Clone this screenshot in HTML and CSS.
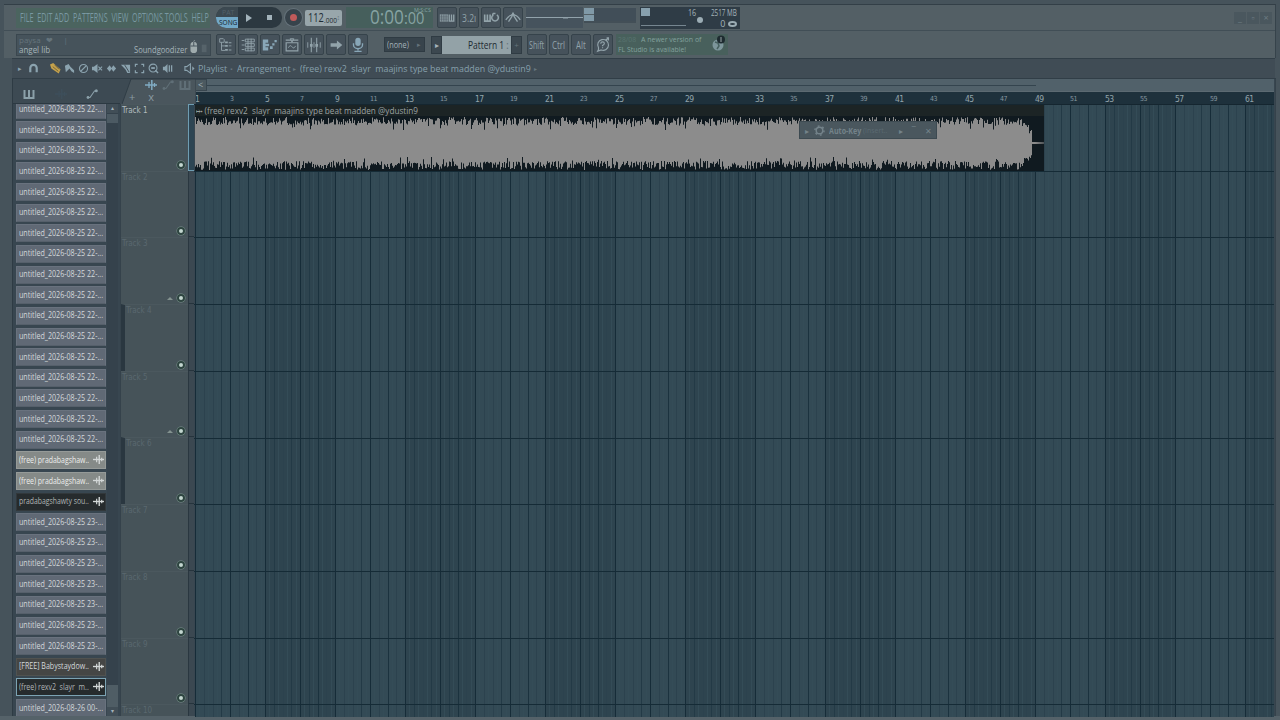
FILE: index.html
```
<!DOCTYPE html>
<html lang="en">
<head>
  <meta charset="UTF-8">
  <title>Playlist - Arrangement</title>
  <link rel="stylesheet" href="styles.css">
</head>
<body>

  <!-- Icons -->
  <svg class="defs">
    <symbol id="i-magnet" viewBox="0 0 12 12"><path d="M2.5 10V5.500a3.500 3.500 0 0 1 7 0V10" fill="none" stroke="currentColor" stroke-width="2.400"/></symbol>
    <symbol id="i-pencil" viewBox="0 0 12 12"><path d="M0 1.500l3.500-1.500 8 7-2 4.500-8-5.500z" fill="#c5a24c"/><path d="M3 4l6 5M5 2l5 5" stroke="#5c5136" stroke-width=".8"/></symbol>
    <symbol id="i-brush" viewBox="0 0 12 12"><path d="M1 3l4-2 2 3 4 4v3L8 9 6 6 2 10z" fill="currentColor"/></symbol>
    <symbol id="i-ban" viewBox="0 0 12 12"><circle cx="6" cy="6" r="4.400" fill="none" stroke="currentColor" stroke-width="1.200"/><path d="M3 9l6-6" stroke="currentColor" stroke-width="1.200"/></symbol>
    <symbol id="i-mute" viewBox="0 0 12 12"><path d="M0 4h2l4-3v10L2 8H0z" fill="currentColor"/><path d="M7 4l4 4M11 4L7 8" stroke="currentColor" stroke-width="1.200"/></symbol>
    <symbol id="i-slip" viewBox="0 0 12 12"><path d="M1 6l3-3.500L6 5.500 8 2.500 11 6 8 9.500 6 6.500 4 9.500z" fill="currentColor"/></symbol>
    <symbol id="i-slice" viewBox="0 0 12 12"><path d="M1 2h6l4 0v9H8L6 7z" fill="currentColor"/><path d="M5 2l5 8" stroke="#404c55"/></symbol>
    <symbol id="i-select" viewBox="0 0 12 12"><path d="M1.500 4V1.500h2.500M8 1.500h2.500V4M10.500 8v2.500H8M4 10.500H1.500V8" fill="none" stroke="currentColor" stroke-width="1.300"/></symbol>
    <symbol id="i-zoom" viewBox="0 0 12 12"><circle cx="5.500" cy="5.500" r="4.300" fill="none" stroke="currentColor" stroke-width="1.200"/><path d="M8 8l3 3" stroke="currentColor" stroke-width="1.500"/><path d="M3.500 5.500h4" stroke="currentColor" stroke-width="2"/></symbol>
    <symbol id="i-play" viewBox="0 0 12 12"><path d="M1 4h2l3-3v10L3 8H1z" fill="currentColor"/><path d="M8 2.500v7M10.500 2.500v7" stroke="currentColor" stroke-width="1.400"/></symbol>
    <symbol id="i-speaker" viewBox="0 0 12 12"><path d="M1 4h2l4-3v10L3 8H1z" fill="none" stroke="currentColor" stroke-width="1.200"/><path d="M9 3.500L11.500 6 9 8.500z" fill="currentColor"/></symbol>
    <symbol id="i-piano" viewBox="0 0 12 12"><path d="M1.500 2v8h9V2M6 2v7" fill="none" stroke="currentColor" stroke-width="2"/></symbol>
    <symbol id="i-line" viewBox="0 0 12 12"><path d="M2 9.500h2L8.500 3H10" fill="none" stroke="currentColor" stroke-width="1.100"/><circle cx="2" cy="9.500" r="1.400" fill="currentColor"/><circle cx="10.300" cy="2.800" r="1.500" fill="currentColor"/></symbol>
    <symbol id="i-wave" viewBox="0 0 12 12"><path d="M0 6h12" stroke="currentColor" stroke-width="1.500"/><path d="M4 3v6M9.500 4v4" stroke="currentColor" stroke-width="1.300"/><path d="M6.800 1v10" stroke="currentColor" stroke-width="1.500"/></symbol>

    <symbol id="b-typing" viewBox="0 0 20 20"><path d="M2 6h9v8H2z" fill="currentColor"/><path d="M2 8h9M2 10h9M2 12h9M4 6v8M6.500 6v8M9 6v8" stroke="#46525b" stroke-width=".6"/><path d="M12.500 6v7.500h5V6M15 6v7" fill="none" stroke="currentColor" stroke-width="1.500"/></symbol>
    <symbol id="b-loop" viewBox="0 0 20 20"><path d="M3 6v7.500h6V6M6 6v7" fill="none" stroke="currentColor" stroke-width="1.800"/><path d="M12.500 6.500a3.700 3.700 0 1 0 4 0M12 5v3M12 5h3" fill="none" stroke="currentColor" stroke-width="1.700"/></symbol>
    <symbol id="b-metro" viewBox="0 0 20 20"><path d="M2 12q4-6 8-5 4-1 8 5M10 4v4M9 8l-4 6M11 8l4 6" fill="none" stroke="currentColor" stroke-width="1.500"/><path d="M7.500 7L10 4l2.500 3z" fill="currentColor"/></symbol>
    <symbol id="b-browser" viewBox="0 0 20 20"><path d="M3 3h4l1 1v3H3zM5 7v9h4M5 11h4" fill="none" stroke="currentColor" stroke-width="1"/><path d="M9 6h3v2H9zM9 10h3v2H9zM9 14.500h3v2H9zM13 7h3v1h-3zM13 10.500h3v1h-3zM13 15h3v1h-3z" fill="currentColor"/></symbol>
    <symbol id="b-rack" viewBox="0 0 20 20"><path d="M3 5h3M3 10h3M3 15h3M7 3.500h10v3H7zM7 8.500h10v3H7zM7 13.500h10v3H7zM10 3v14M13.500 3v14" fill="none" stroke="currentColor" stroke-width="1"/></symbol>
    <symbol id="b-steps" viewBox="0 0 20 20"><path d="M2 4h6v3.500H5v1h4v3H5v1h3V16H2z" fill="currentColor"/><path d="M10 11.500h3v3h-3zM12.500 8h2.500v2.500h-2.500zM15 4.500h2.500V7H15z" fill="currentColor"/></symbol>
    <symbol id="b-playlist" viewBox="0 0 20 20"><path d="M3.500 7.500h13v9h-13zM3 4.500h14" fill="none" stroke="currentColor" stroke-width="1.300"/><path d="M8 3h4l-2 4zM6 13q2-4 4-1t4-1" fill="none" stroke="currentColor"/></symbol>
    <symbol id="b-mixer" viewBox="0 0 20 20"><path d="M7 2v16M13 2v16" stroke="currentColor" stroke-width="1.200"/><path d="M3 7v6M17 7v6M10 7v6" stroke="currentColor" stroke-width="1.400" opacity=".7"/><path d="M5.500 9h3v3h-3zM11.500 9h3v3h-3z" fill="currentColor"/></symbol>
    <symbol id="b-arrow" viewBox="0 0 20 20"><path d="M4 8h7V5l6 5-6 5v-3H4z" fill="currentColor"/></symbol>
    <symbol id="b-mic" viewBox="0 0 20 20"><rect x="7" y="2" width="6" height="9" rx="3" fill="currentColor"/><path d="M5 8v2a5 4 0 0 0 10 0V8M10 14v2M6 17h8" fill="none" stroke="currentColor" stroke-width="1.500"/></symbol>
    <symbol id="b-help" viewBox="0 0 20 20"><path d="M5 15l-1 2 4-1.500a6 6 0 1 0-3-2.500zM13 5l3-3M14 2h2v3" fill="none" stroke="currentColor" stroke-width="1.300"/><path d="M7.500 8.500q0-2 2-2t2 1.800q0 1-2 2.200v1M9.500 12.500v1" fill="none" stroke="currentColor" stroke-width="1.300"/></symbol>
  </svg>

  <div class="window">

    <div class="toolbar">
      <div class="row">
        <div class="menu"><span data-w="189">FILE&nbsp; EDIT ADD&nbsp; PATTERNS&nbsp; VIEW&nbsp; OPTIONS TOOLS&nbsp; HELP</span></div>
        <div class="transport">
          <div class="mode"><span class="pat" data-w="12">PAT</span><span class="song" data-w="18">SONG</span></div>
          <div class="play"></div>
          <div class="stop"></div>
        </div>
        <div class="record"></div>
        <div class="tempo"><span data-w="16">112</span><small data-w="13">.000</small><i>↕</i></div>
        <div class="clock">
          <span data-w="54">0:00<small>:00</small></span>
          <sup data-w="17">M:S:CS</sup>
        </div>
        <div class="buttons">
          <div class="btn"><svg><use href="#b-typing"/></svg></div>
          <div class="btn"><b data-w="14">3.2ı</b></div>
          <div class="btn"><svg><use href="#b-loop"/></svg></div>
          <div class="btn"><svg><use href="#b-metro"/></svg></div>
        </div>
        <div class="scope">
          <svg viewBox="0 0 110 21"><path d="M0 0h57v21H0z" fill="#46535d"/><path d="M0 10.500h57M37 11h5" stroke="#92a2ab"/><path d="M58 1h10v6H58zM58 8h10v6H58z" fill="#8099a7"/><path d="M68 1h42v13H68z" fill="#414e58"/><path d="M58 15h52" stroke="#34414b"/></svg>
        </div>
        <div class="cpu">
          <svg viewBox="0 0 46 21"><path d="M1 1h9v8H1z" fill="#87a0ae"/><path d="M1 18.500h45" stroke="#768690"/></svg>
          <div class="poly"><span data-w="8">16</span><i></i></div>
          <div class="mem"><span data-w="26">2517 MB</span><span>0 <u></u></span></div>
        </div>
        <div class="winbtns"><i>_</i><i>▫</i><i>×</i></div>
      </div>

      <div class="row second">
        <div class="hint">
          <div class="hint-top"><span data-w="22">paysa</span><em>❤</em><em>|</em></div>
          <div class="hint-main"><span data-w="31">angel lib</span><span class="right" data-w="53">Soundgoodizer</span></div>
          <svg class="mouse" viewBox="0 0 20 18"><path d="M5 5q0-3 2-3M2 8q0-4 3.500-4T9 8v5q0 3-3.500 3T2 13z" fill="#9fabad"/><path d="M2 8.500h7M5.500 4v4.500" stroke="#46535b"/><path d="M14 7h5v8h-5z" fill="#56636a"/></svg>
        </div>
        <div class="buttons">
          <div class="btn"><svg><use href="#b-browser"/></svg></div>
          <div class="btn"><svg><use href="#b-rack"/></svg></div>
          <div class="btn blue"><svg><use href="#b-steps"/></svg></div>
          <div class="btn"><svg><use href="#b-playlist"/></svg></div>
          <div class="btn"><svg><use href="#b-mixer"/></svg></div>
          <div class="btn"><svg><use href="#b-arrow"/></svg></div>
          <div class="btn blue"><svg><use href="#b-mic"/></svg></div>
        </div>
        <div class="snap"><span data-w="22">(none)</span><i>▸</i></div>
        <div class="pattern">
          <div class="side">▸</div>
          <div class="name"><span data-w="36">Pattern 1</span><i>:</i></div>
          <div class="side plus">+</div>
        </div>
        <div class="buttons keys">
          <div class="btn"><span data-w="15">Shift</span></div>
          <div class="btn"><span data-w="13">Ctrl</span></div>
          <div class="btn"><span data-w="10">Alt</span></div>
          <div class="btn"><svg><use href="#b-help"/></svg></div>
        </div>
        <div class="news">
          <div><span class="date" data-w="18">28/08</span><span data-w="60">A newer version of</span></div>
          <div><span data-w="68">FL Studio is available!</span></div>
          <svg viewBox="0 0 14 18"><circle cx="6" cy="10" r="5.500" fill="#7d969b"/><path d="M3 7l3 1 1 3-2 3" stroke="#47605f" stroke-width="1.500" fill="none"/><circle cx="9" cy="4.500" r="4" fill="#1e2b30"/><path d="M9 2v5" stroke="#96a4a6"/></svg>
        </div>
      </div>
    </div>

    <div class="titlebar">
      <span class="tri">▸</span>
      <svg class="magnet"><use href="#i-magnet"/></svg>
      <div class="tools">
        <svg><use href="#i-pencil"/></svg>
        <svg><use href="#i-brush"/></svg>
        <svg><use href="#i-ban"/></svg>
        <svg><use href="#i-mute"/></svg>
        <svg><use href="#i-slip"/></svg>
        <svg><use href="#i-slice"/></svg>
        <svg><use href="#i-select"/></svg>
        <svg><use href="#i-zoom"/></svg>
        <svg><use href="#i-play"/></svg>
      </div>
      <svg class="speaker"><use href="#i-speaker"/></svg>
      <span class="crumb" data-w="29">Playlist</span><em>▪</em>
      <span class="crumb" data-w="54">Arrangement</span><em>▸</em>
      <span class="crumb" data-w="231">(free) rexv2&nbsp; slayr&nbsp; maajins type beat madden @ydustin9</span><em>▸</em>
    </div>

    <div class="main">
      <div class="picker">
        <div class="picker-head">
          <svg><use href="#i-piano"/></svg>
          <svg class="dim"><use href="#i-wave"/></svg>
          <svg><use href="#i-line"/></svg>
        </div>
        <div class="picker-body">
          <div class="clips" id="clips"></div>
          <div class="scroll"><i>▴</i><i class="cap"></i><b></b><i>▾</i></div>
        </div>
      </div>

      <div class="tracks">
        <div class="tracks-head">
          <svg viewBox="0 0 74 26">
            <path d="M0 26L9 1h65v25" fill="#4a565d" stroke="#303d46"/>
          </svg>
          <div class="types">
            <svg class="on"><use href="#i-wave"/></svg>
            <svg><use href="#i-line"/></svg>
            <svg><use href="#i-piano"/></svg>
          </div>
          <div class="ops"><span>+</span><span>x</span></div>
        </div>
        <div id="tracks"></div>
      </div>

      <div class="arrange">
        <div class="hscroll"><span>&lt;</span><i></i></div>
        <div class="ruler" id="ruler"></div>
        <div class="canvas">
          <svg id="grid" width="1082" height="612"></svg>
          <div class="clip">
            <div class="clip-name"><span data-w="222">⤠ (free) rexv2&nbsp; slayr&nbsp; maajins type beat madden @ydustin9</span></div>
            <svg id="wave" width="849" height="55"></svg>
          </div>
          <div class="plugin">
            <span>▸</span>
            <svg viewBox="0 0 12 12"><circle cx="6" cy="6" r="3.600" fill="none" stroke="currentColor" stroke-width="1.600"/><circle cx="6" cy="6" r="5" fill="none" stroke="currentColor" stroke-width="1.500" stroke-dasharray="2 3.240"/></svg>
            <strong data-w="32">Auto-Key</strong><small data-w="24">(Insert..</small>
            <span class="gap">▸</span><span>‾</span><span>✕</span>
          </div>
        </div>
      </div>
    </div>
  </div>

  <script>
    const BAR = 17.5;
    const TRACK = 66.7;
    const clips = document.getElementById('clips');
    const tracks = document.getElementById('tracks');
    const ruler = document.getElementById('ruler');

    // Picker list
    const list = [];
    for (let i = 0; i < 17; i++) list.push(['untitled_2026-08-25 22-...', '']);
    list.push(['(free) pradabagshaw..', 'light']);
    list.push(['(free) pradabagshaw..', 'light']);
    list.push(['pradabagshawty sou..', 'dark']);
    for (let i = 0; i < 7; i++) list.push(['untitled_2026-08-25 23-...', '']);
    list.push(['[FREE] Babystaydow..', 'brown']);
    list.push(['(free) rexv2  slayr  m..', 'dark selected']);
    list.push(['untitled_2026-08-26 00-...', '']);

    list.forEach(([name, type]) => {
      const item = document.createElement('div');
      item.className = 'item ' + type;
      const label = document.createElement('span');
      label.textContent = name;
      label.dataset.w = type ? 70 : 84;
      item.appendChild(label);
      if (type) item.innerHTML += '<svg><use href="#i-wave"/></svg>';
      clips.appendChild(item);
    });

    // Track headers
    for (let i = 1; i <= 10; i++) {
      const t = document.createElement('div');
      t.className = 'track';
      if (i === 1) t.classList.add('active');
      if (i === 4 || i === 6) t.classList.add('grouped');
      t.innerHTML = `<div class="panel"><span>Track ${i}</span><div class="led">${i === 3 || i === 5 ? '<em></em>' : ''}<i></i></div></div><div class="edge"></div>`;
      tracks.appendChild(t);
    }

    // Ruler
    for (let n = 1; n <= 61; n += 2) {
      const s = document.createElement('span');
      s.textContent = n;
      if (n % 4 === 3) s.className = 'minor';
      ruler.appendChild(s);
    }

    // Grid
    let g = '';
    for (let n = 0; n < 62; n += 4) {
      const fill = n % 8 ? '#2e444f' : '#334a55';
      g += `<rect x="${1 + n * BAR}" y="0" width="${BAR * 4}" height="612" fill="${fill}"/>`;
    }
    for (let b = 0; b < 62 * 4; b++) {
      const x = Math.round(1 + b * BAR / 4);
      const n = b / 4;
      let color = '#2c424e';
      if (b % 2 === 1) color = '#344c57';
      if (b % 16 === 6 || b % 32 === 18 || b % 32 === 26) color = '#233a46';
      if (b % 4 === 0 && n % 4 !== 1) color = n % 2 ? '#1b323e' : '#162c38';
      g += `<rect x="${x}" y="0" width="1" height="612" fill="${color}"/>`;
    }
    for (let i = 1; i < 10; i++) {
      g += `<rect x="0" y="${Math.round(i * TRACK) - 1}" width="1082" height="1" fill="#152b36"/>`;
    }
    document.getElementById('grid').innerHTML = g;

    // Waveform
    let seed = 11;
    function rnd() {
      seed = (seed * 16807) % 2147483647;
      return seed / 2147483647;
    }
    let upper = '', lower = '';
    for (let x = 0; x <= 836; x++) {
      const edge = x > 828 ? (x - 828) * 1.4 : 0;
      const up = 1 + Math.pow(rnd(), .9) * (rnd() > .85 ? 13 : 8) + edge;
      const low = 54 - Math.pow(rnd(), .8) * (rnd() > .85 ? 13 : 9) - edge;
      upper += `L${x} ${up.toFixed(1)}h1`;
      lower = `L${x + 1} ${low.toFixed(1)}h-1` + lower;
    }
    document.getElementById('wave').innerHTML =
      `<path d="M0 27${upper}L837 27${lower}Z" fill="#8c8c8c"/><path d="M836 26h4l9 .6v.8l-9 .6h-4z" fill="#8c8c8c"/>`;

    // Squeeze labels to the width of the narrow UI face
    document.querySelectorAll('[data-w]').forEach(el => {
      const natural = el.offsetWidth;
      const w = Number(el.dataset.w);
      el.style.transform = `scaleX(${w / natural})`;
      el.style.marginRight = (w - natural) + 'px';
    });
  </script>

</body>
</html>
```
FILE: styles.css
```
:root {
  --bar: #535f65;
  --bar-dark: #404c55;
  --inset: #46525b;
  --line: #35424b;
  --icon: #8ba3af;
  --text: #a5b3ba;
}

* {
  box-sizing: border-box;
}

body {
  margin: 0;
  width: 1280px;
  height: 720px;
  overflow: hidden;
  background: #4c5a62;
  font-family: 'Open Sans', 'Noto Sans', sans-serif;
  font-size: 9px;
  color: var(--text);
}

i, em, u {
  font-style: normal;
  text-decoration: none;
}

svg {
  display: block;
  flex: none;
}

.defs {
  display: none;
}

[data-w] {
  display: inline-block;
  flex: none;
  white-space: pre;
  transform-origin: 0 50%;
}

.window {
  height: 720px;
  padding: 4px 4px 0;
  border-bottom: 4px solid #556269;
  background: #46535b;
}

/* Toolbar */
.toolbar {
  height: 54px;
  background: var(--bar);
  border-top: 1px solid #333f47;
  border-right: 1px solid #36434b;
}

.row {
  display: flex;
  align-items: center;
  height: 26px;
  padding-left: 12px;
  border-bottom: 1px solid #414e56;
}

.row.second {
  height: 27px;
  border-bottom: 0;
}

.menu {
  flex: none;
  width: 194px;
  height: 20px;
  padding-left: 4px;
  background: #4b645f;
  font-size: 12px;
  line-height: 19px;
  color: #7998a2;
}

.transport {
  display: flex;
  align-items: center;
  width: 66px;
  height: 21px;
  margin-left: 6px;
  border-radius: 10px;
  background: #2c3840;
  overflow: hidden;
}

.mode {
  display: flex;
  flex-direction: column;
  align-items: flex-start;
  width: 22px;
  height: 21px;
  padding-left: 3px;
  font-size: 8px;
  line-height: 10px;
  background: linear-gradient(#3c4951 10px, #72a9c8 10px);
}

.mode .pat {
  margin-left: 3px;
  color: #53616a;
}

.mode .song {
  color: #14212b;
}

.play {
  margin-left: 8px;
  border: 4px solid transparent;
  border-left: 6px solid #a3b3bb;
  border-right: 0;
}

.stop {
  width: 5px;
  height: 5px;
  margin-left: 15px;
  background: #a3b3bb;
}

.record {
  width: 17px;
  height: 17px;
  margin-left: 3px;
  border: 5px solid #37434b;
  border-radius: 50%;
  background: #c05a5a;
  box-shadow: 0 0 0 1px #65727a;
}

.tempo {
  display: flex;
  align-items: center;
  width: 37px;
  height: 16px;
  margin-left: 3px;
  padding-left: 3px;
  border-radius: 2px;
  background: #98a6ab;
  color: #1e2b33;
  font-size: 12px;
}

.tempo small {
  font-size: 8px;
  margin-top: 3px;
}

.tempo i {
  font-size: 7px;
  color: #65747c;
}

.clock {
  display: flex;
  align-items: center;
  position: relative;
  width: 87px;
  height: 21px;
  margin-left: 4px;
  padding-left: 24px;
  background: #465f5c;
  color: #86a3a3;
  font-size: 20px;
  line-height: 20px;
}

.clock small {
  font-size: 17px;
}

.clock sup {
  position: absolute;
  top: 0;
  left: 68px;
  font-size: 6px;
  line-height: 6px;
}

.buttons {
  display: flex;
  gap: 2px;
  margin-left: 4px;
}

.btn {
  display: flex;
  align-items: center;
  justify-content: center;
  width: 20px;
  height: 21px;
  background: var(--inset);
  border: 1px solid #36434b;
  border-radius: 2px;
  color: #92a3aa;
}

.btn svg {
  width: 18px;
  height: 18px;
}

.btn.blue {
  color: #88a6b7;
}

.btn b {
  font-size: 11px;
  font-weight: 400;
}

.scope {
  width: 110px;
  margin-left: 3px;
}

.cpu {
  display: flex;
  width: 100px;
  height: 22px;
  margin-left: 4px;
  background: #2f3c46;
  font-size: 9px;
  line-height: 11px;
}

.cpu svg {
  width: 46px;
  height: 21px;
}

.poly {
  display: flex;
  flex-direction: column;
  align-items: flex-end;
  width: 10px;
}

.poly i {
  width: 6px;
  height: 6px;
  margin-top: -1px;
  margin-right: -7px;
  border-radius: 50%;
  background: #9cadb5;
}

.poly + .mem {
  margin-left: 15px;
}

.mem {
  display: flex;
  flex-direction: column;
  align-items: flex-end;
}

.mem u {
  display: inline-block;
  width: 9px;
  height: 6px;
  border: 2px solid #9cadb5;
  border-radius: 50%;
}

.winbtns {
  display: flex;
  gap: 1px;
  margin-left: auto;
  margin-right: 3px;
}

.winbtns i {
  width: 12px;
  height: 12px;
  background: #4a575e;
  color: #6d7b82;
  text-align: center;
  line-height: 11px;
}

.hint {
  position: relative;
  width: 195px;
  height: 22px;
  padding-left: 2px;
  background: #46535b;
  border: 1px solid #3a474f;
  font-size: 9px;
  line-height: 11px;
}

.hint-top {
  display: flex;
  gap: 5px;
  color: #65747c;
  font-size: 8px;
  line-height: 9px;
}

.hint-top em:last-child {
  margin-left: 6px;
}

.hint-main {
  display: flex;
}

.hint-main .right {
  margin-left: 84px;
}

.mouse {
  position: absolute;
  top: 3px;
  right: 2px;
  width: 20px;
  height: 17px;
}

.second .buttons {
  margin-left: 5px;
}

.snap {
  display: flex;
  justify-content: space-between;
  width: 41px;
  height: 15px;
  margin-left: 16px;
  padding: 0 3px 0 2px;
  background: #38444c;
  border: 1px solid #2f3b43;
  line-height: 13px;
}

.snap i {
  font-size: 7px;
  color: #64727a;
}

.pattern {
  display: flex;
  align-items: center;
  margin-left: 6px;
}

.side {
  width: 11px;
  height: 18px;
  background: #3c4850;
  border: 1px solid #303c44;
  font-size: 8px;
  line-height: 15px;
  text-align: center;
}

.side.plus {
  color: #65737b;
}

.name {
  display: flex;
  justify-content: flex-end;
  width: 69px;
  height: 18px;
  padding-right: 2px;
  background: #93a2a7;
  color: #1c2931;
  font-size: 11px;
  line-height: 17px;
}

.name i {
  margin-left: 2px;
  color: #64727a;
}

.keys {
  font-size: 11px;
}

.news {
  position: relative;
  width: 112px;
  height: 21px;
  margin-left: 3px;
  padding-left: 2px;
  background: #48605c;
  font-size: 8px;
  line-height: 10px;
  color: #83a09d;
}

.news .date {
  color: #587470;
}

.news > div {
  display: flex;
  gap: 5px;
}

.news svg {
  position: absolute;
  top: 1px;
  right: 2px;
  width: 14px;
  height: 18px;
}

/* Playlist window title */
.titlebar {
  display: flex;
  align-items: center;
  height: 20px;
  padding-left: 6px;
  margin-left: 8px;
  margin-right: 1px;
  background: var(--bar-dark);
  border-top: 1px solid #313e47;
  color: var(--icon);
}

.titlebar svg {
  width: 11px;
  height: 11px;
}

.tri {
  width: 10px;
  font-size: 7px;
}

.titlebar .magnet {
  margin-right: 11px;
}

.tools {
  display: flex;
  gap: 3px;
}

.titlebar .speaker {
  margin-left: 11px;
}

.crumb {
  margin-left: 3px;
  color: #87a0ac;
}

.titlebar em {
  width: 3.5px;
  margin-left: 3px;
  font-size: 6px;
  color: #687780;
}

/* Playlist */
.main {
  display: flex;
  height: 638px;
  margin-left: 8px;
  border-top: 1px solid #313e47;
  border-left: 1px solid #2e3b44;
  border-right: 1px solid #35424b;
  background: #384650;
}

.picker {
  flex: none;
  width: 107px;
}

.picker-head {
  display: flex;
  align-items: flex-end;
  justify-content: space-between;
  height: 25px;
  padding: 0 22px 3px 10px;
  background: #3d4a53;
  border-bottom: 1px solid #2c3942;
  color: #8ba0a9;
}

.picker-head svg {
  width: 12px;
  height: 12px;
}

.picker-head .dim {
  color: #3e4f5b;
}

.picker-body {
  display: flex;
  height: 612px;
  overflow: hidden;
}

.clips {
  width: 90px;
  margin: -3.500px 1px 0 3px;
}

.item {
  display: flex;
  align-items: center;
  justify-content: space-between;
  height: 18px;
  margin-bottom: 2.65px;
  padding: 0 1px 1px 2px;
  background: #606975;
  border: 1px solid #69727e;
  border-bottom-color: #56606b;
  color: #d3d8db;
  font-size: 9px;
  line-height: 16px;
}

.item svg {
  width: 11px;
  height: 11px;
  color: #d3d7d7;
}

.item.light {
  background: #858a88;
  border-color: #959a98;
  color: #eceeec;
}

.item.dark {
  background: #262b2d;
  border-color: #32383b;
  color: #b0b5b5;
}

.item.brown {
  background: #454645;
  border-color: #505250;
}

.item.selected {
  border-color: #7ca3b3;
}

.scroll {
  display: flex;
  flex-direction: column;
  width: 11px;
  background: #35424c;
}

.scroll i {
  height: 9px;
  background: #414e57;
  font-size: 6px;
  line-height: 9px;
  text-align: center;
}

.scroll .cap {
  margin-top: 1px;
  background: #4c5a63;
}

.scroll b {
  height: 22px;
  margin-top: auto;
  background: #4f5d65;
}

.tracks {
  flex: none;
  width: 74px;
  background: #35424b;
}

.tracks-head {
  position: relative;
  height: 25px;
  background: #3d4a53;
}

.tracks-head > svg {
  position: absolute;
  left: 2px;
  top: -1px;
  width: 74px;
  height: 26px;
}

.types {
  position: absolute;
  left: 25px;
  top: 0;
  display: flex;
  gap: 5px;
  color: #606f77;
}

.types svg {
  width: 12px;
  height: 12px;
}

.types .on {
  color: #80acc4;
}

.ops {
  position: absolute;
  left: 9px;
  top: 12px;
  display: flex;
  gap: 13px;
  font-size: 11px;
  line-height: 12px;
  color: #8b9aa2;
}

.track {
  display: flex;
  height: 66.7px;
  margin-left: 1px;
}

.panel {
  display: flex;
  flex-direction: column;
  justify-content: space-between;
  width: 67px;
  padding: 0 3px 2px 1px;
  background: #465359;
  border-top: 1px solid #4b585e;
  font: 8px/12px 'DejaVu Sans Condensed', 'DejaVu Sans', sans-serif;
  color: #5a686f;
}

.edge {
  width: 6px;
  background: #3b4851;
  border-left: 1px solid #2a3740;
  border-bottom: 1px solid #26343d;
}

#tracks {
  height: 612px;
  overflow: hidden;
}

.active .panel {
  color: #b0bbbe;
}

.active .edge {
  margin-right: -1px;
  width: 7px;
  background: #2d4553;
  border: 1px solid #6f9db2;
}

.grouped .panel {
  border-left: 4px solid #2a3740;
}

.led {
  display: flex;
  align-items: center;
  justify-content: flex-end;
  gap: 4px;
}

.led i {
  width: 8px;
  height: 8px;
  border: 2px solid #2e4440;
  border-radius: 50%;
  background: #c3d6cf;
  box-shadow: 0 0 0 .5px #7d958f;
}

.led em {
  border: 3px solid transparent;
  border-top: 0;
  border-bottom: 3px solid #83928f;
}

.arrange {
  flex: none;
  width: 1080px;
}

.hscroll {
  display: flex;
  align-items: center;
  height: 13px;
  background: #51616a;
  border-bottom: 1px solid #5c6a72;
}

.hscroll span {
  width: 13px;
  height: 12px;
  background: #4b5960;
  border: 1px solid #38464f;
  line-height: 9px;
  text-align: center;
}

.hscroll i {
  width: 829px;
  height: 1px;
  background: #34444e;
}

.ruler {
  display: flex;
  height: 13px;
  padding-left: 1px;
  background: #1e313c;
  border-bottom: 1px solid #152630;
  color: #93a4ab;
  font: 8.5px/14px 'DejaVu Sans Condensed', sans-serif;
  overflow: hidden;
}

.ruler span {
  flex: none;
  width: 35px;
  letter-spacing: -.7px;
}

.ruler .minor {
  font-size: 7px;
  line-height: 15px;
  letter-spacing: -.5px;
  color: #8797a0;
}

.canvas {
  position: relative;
  height: 612px;
  overflow: hidden;
}

.clip {
  position: absolute;
  left: 1px;
  top: 0;
  width: 849px;
  height: 66px;
  background: #101a20;
}

.clip-name {
  height: 11px;
  padding-left: 1px;
  background: #1c2425;
  color: #9ba2a2;
  font-size: 9px;
  line-height: 11px;
}

.plugin {
  position: absolute;
  left: 605px;
  top: 16px;
  display: flex;
  align-items: center;
  width: 138px;
  height: 18px;
  padding-left: 5px;
  background: #4a575e;
  border: 1px solid #3d4a51;
  color: #74838a;
  font-size: 8px;
}

.plugin svg {
  width: 11px;
  height: 11px;
  margin: 0 4px 0 5px;
}

.plugin small {
  margin-left: 2px;
  color: #5b6a71;
}

.plugin span + span {
  margin-left: 9px;
}

.plugin .gap {
  margin-left: 11px;
}
```
